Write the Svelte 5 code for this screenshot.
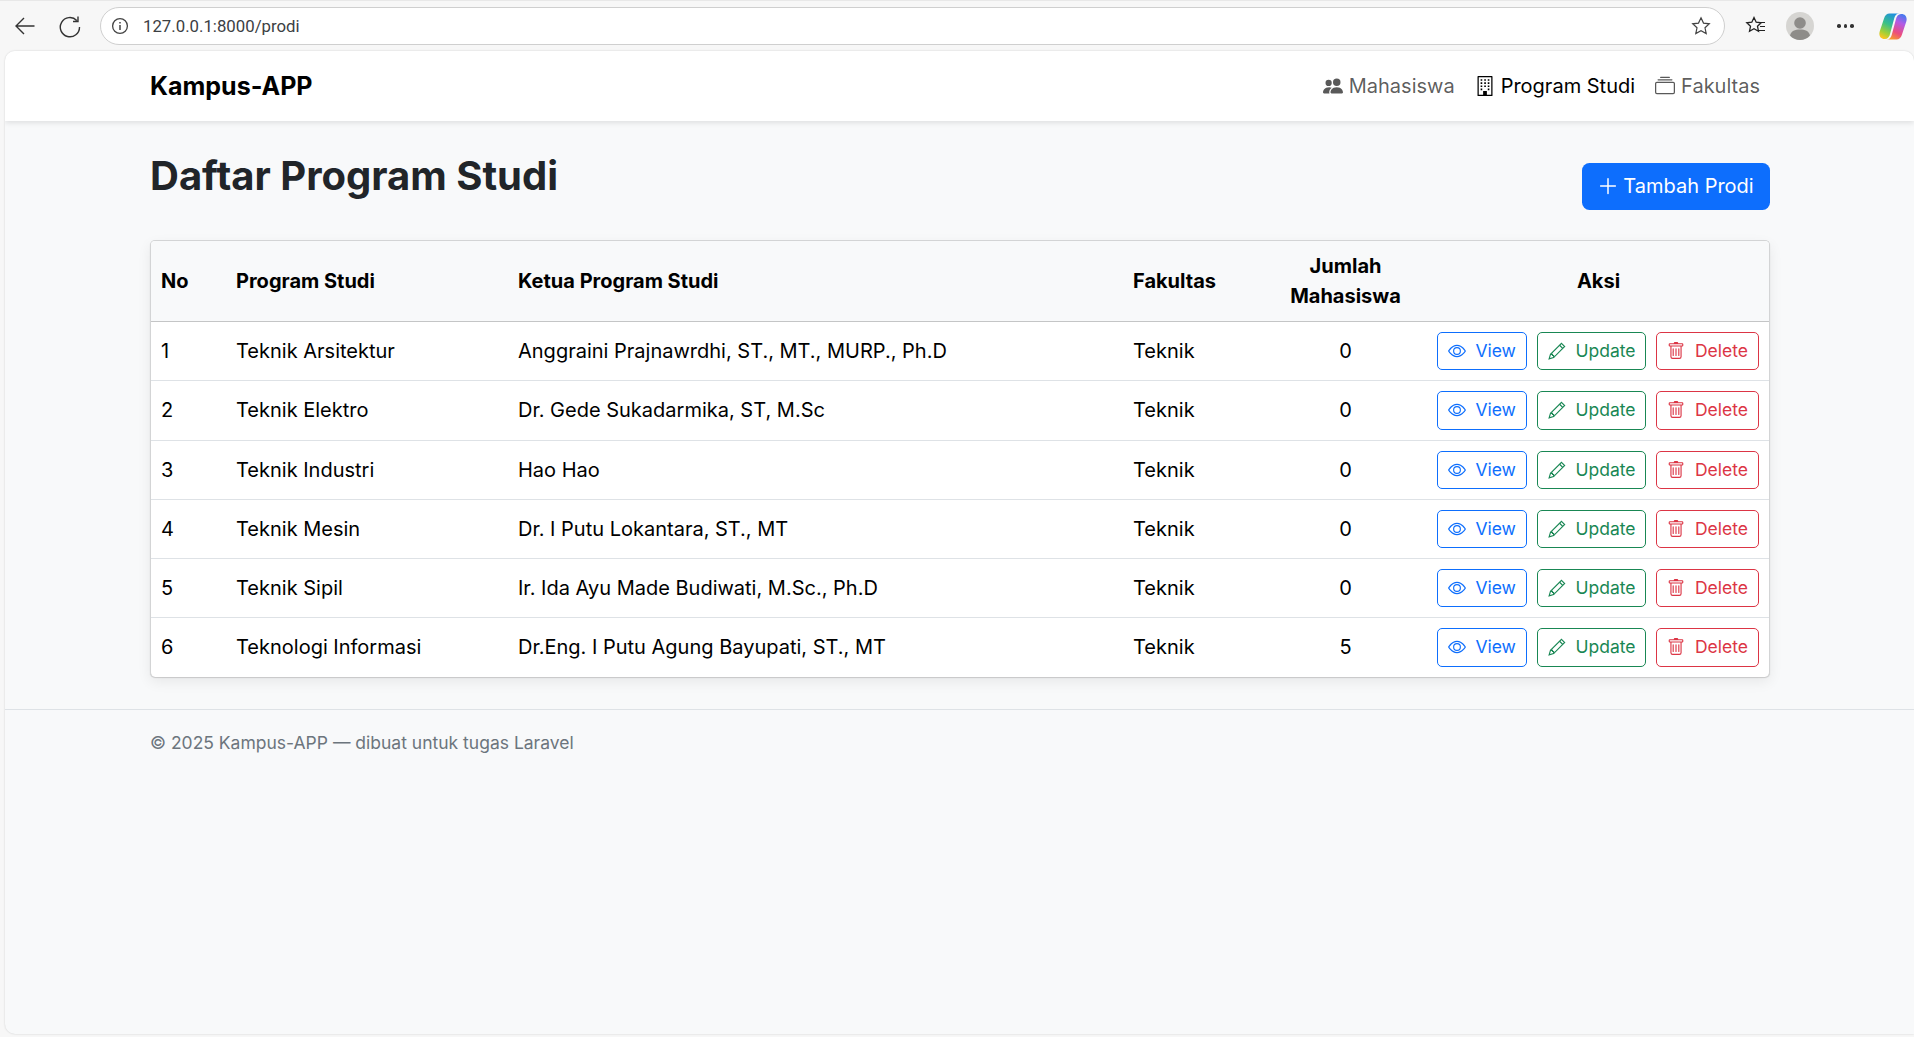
<script>
  const rows = [
    { no: 1, prodi: "Teknik Arsitektur", ketua: "Anggraini Prajnawrdhi, ST., MT., MURP., Ph.D", jumlah: 0 },
    { no: 2, prodi: "Teknik Elektro", ketua: "Dr. Gede Sukadarmika, ST, M.Sc", jumlah: 0 },
    { no: 3, prodi: "Teknik Industri", ketua: "Hao Hao", jumlah: 0 },
    { no: 4, prodi: "Teknik Mesin", ketua: "Dr. I Putu Lokantara, ST., MT", jumlah: 0 },
    { no: 5, prodi: "Teknik Sipil", ketua: "Ir. Ida Ayu Made Budiwati, M.Sc., Ph.D", jumlah: 0 },
    { no: 6, prodi: "Teknologi Informasi", ketua: "Dr.Eng. I Putu Agung Bayupati, ST., MT", jumlah: 5 }
  ];
</script>

<div class="browser">
  <div class="chrome">
    <svg class="tool back" viewBox="0 0 24 24" width="24" height="24"><path d="M21.500 12H3M11 4l-8 8 8 8" fill="none" stroke="#333" stroke-width="1.400"/></svg>
    <svg class="tool reload" viewBox="0 0 24 24" width="24" height="24"><path d="M18.800 6.500A9.600 9.600 0 1 0 21.500 13M20 2.500v5h-5" fill="none" stroke="#333" stroke-width="1.400"/></svg>
    <div class="address">
      <svg viewBox="0 0 18 18" width="18" height="18"><circle cx="9" cy="9" r="7.400" fill="none" stroke="#444" stroke-width="1.300"/><path d="M9 8v5M9 5v1.500" stroke="#444" stroke-width="1.500"/></svg>
      <span class="url">127.0.0.1:8000/prodi</span>
      <svg class="star" viewBox="0 0 20 20" width="20" height="20"><path d="M10 1.800l2.500 5.300 5.800.7-4.300 4 1.200 5.800L10 14.700l-5.200 2.900L6 11.800l-4.300-4 5.800-.7z" fill="none" stroke="#444" stroke-width="1.200"/></svg>
    </div>
    <svg class="favs" viewBox="0 0 22 22" width="22" height="22"><path d="M9 2.500l2.200 4.700 5 .6-3.700 3.500 1 5L9 13.800l-4.500 2.500 1-5L1.800 7.800l5-.6z" fill="none" stroke="#222" stroke-width="1.300"/><path d="M14 7.500h6M15 11.500h5M13 15.500h7" stroke="#222" stroke-width="1.200"/></svg>
    <svg class="avatar" viewBox="0 0 28 28" width="28" height="28"><circle cx="14" cy="14" r="14" fill="#d6d5d2"/><circle cx="14" cy="11" r="5.800" fill="#8e8c89"/><path d="M4 23.500c1-4.500 5-6 10-6s9 1.500 10 6c-2.500 2.800-6 4.500-10 4.500s-7.500-1.700-10-4.500z" fill="#8e8c89"/></svg>
    <span class="dots"><i></i><i></i><i></i></span>
    <svg class="copilot" viewBox="0 0 28 27" width="28" height="27">
      <defs>
        <linearGradient id="cpA" x1="0.700" y1="0" x2="0.300" y2="1"><stop offset="0" stop-color="#1f8fe0"/><stop offset="0.45" stop-color="#38c08a"/><stop offset="0.8" stop-color="#a5d034"/><stop offset="1" stop-color="#f6c522"/></linearGradient>
        <linearGradient id="cpB" x1="0.700" y1="0" x2="0.300" y2="1"><stop offset="0" stop-color="#f79a2e"/><stop offset="0.3" stop-color="#ec4d7e"/><stop offset="0.7" stop-color="#b25be6"/><stop offset="1" stop-color="#4a78ee"/></linearGradient>
      </defs>
      <path d="M10.500.5H20.500C17.500.5 16 2.500 15.300 5L11.300 20C10.500 24 8.500 26 6 26H5.500C1.500 26-.5 22.500.7 18.500L5 5.500C6 2 8 .5 10.500.5Z" fill="url(#cpA)"/>
      <path d="M10.500.5H20.500C17.500.5 16 2.500 15.300 5L11.300 20C10.500 24 8.500 26 6 26H5.500C1.500 26-.5 22.500.7 18.500L5 5.500C6 2 8 .5 10.500.5Z" fill="url(#cpB)" transform="rotate(180 14 13.500)"/>
    </svg>
  </div>

  <div class="page">
    <nav class="navbar">
      <a class="brand" href="#top">Kampus-APP</a>
      <div class="nav-links">
        <a class="nav-link" href="#mahasiswa">
          <svg viewBox="0 0 16 16" width="20" height="20" fill="currentColor"><path d="M7 14s-1 0-1-1 1-4 5-4 5 3 5 4-1 1-1 1H7Zm4-6a3 3 0 1 0 0-6 3 3 0 0 0 0 6Zm-5.800 6A2.200 2.200 0 0 1 5 13c0-1.400.7-2.800 2-3.700A6.500 6.500 0 0 0 5 9c-4 0-5 3-5 4s1 1 1 1h4.200ZM4.500 8a2.500 2.500 0 1 0 0-5 2.500 2.500 0 0 0 0 5Z"/></svg>
          Mahasiswa
        </a>
        <a class="nav-link active" href="#prodi">
          <svg viewBox="0 0 16 16" width="20" height="20" fill="currentColor"><path d="M2.500 0h11a.5.5 0 0 1 .5.5v15a.5.5 0 0 1-.5.5h-11a.5.5 0 0 1-.5-.5V.5a.5.5 0 0 1 .5-.5ZM3 1v14h10V1H3Z"/><path d="M6.500 12h3v3.500h-3zM4.500 2.500h1.300v1.300H4.500zM7.400 2.500h1.300v1.300H7.400zM10.200 2.500h1.300v1.300h-1.300zM4.500 5h1.300v1.300H4.500zM7.400 5h1.300v1.300H7.400zM10.200 5h1.300v1.300h-1.300zM4.500 7.500h1.300v1.300H4.500zM7.400 7.500h1.300v1.300H7.400zM10.200 7.500h1.300v1.300h-1.300zM4.500 10h1.300v1.300H4.500zM10.200 10h1.300v1.300h-1.300z"/></svg>
          Program Studi
        </a>
        <a class="nav-link" href="#fakultas">
          <svg viewBox="0 0 16 16" width="20" height="20" fill="currentColor"><path d="M2.500 3.500a.5.5 0 0 1 0-1h11a.5.5 0 0 1 0 1h-11Zm2-2a.5.5 0 0 1 0-1h7a.5.5 0 0 1 0 1h-7ZM0 13a1.500 1.500 0 0 0 1.500 1.500h13A1.500 1.500 0 0 0 16 13V6a1.500 1.500 0 0 0-1.500-1.500h-13A1.500 1.500 0 0 0 0 6v7Zm1.500.5A.5.5 0 0 1 1 13V6a.5.5 0 0 1 .5-.5h13a.5.5 0 0 1 .5.5v7a.5.5 0 0 1-.5.5h-13Z"/></svg>
          Fakultas
        </a>
      </div>
    </nav>

    <main class="content">
      <div class="head">
        <h1>Daftar Program Studi</h1>
        <a class="btn-add" href="#tambah">
          <svg viewBox="0 0 16 16" width="20" height="20" fill="currentColor"><path d="M8 1.500a.6.6 0 0 1 .6.6v5.300h5.300a.6.6 0 0 1 0 1.200H8.600v5.300a.6.6 0 0 1-1.200 0V8.600H2.100a.6.6 0 0 1 0-1.200h5.300V2.100a.6.6 0 0 1 .6-.6Z"/></svg>
          Tambah Prodi
        </a>
      </div>

      <div class="card">
        <table>
          <colgroup>
            <col style="width:75px" />
            <col style="width:282px" />
            <col style="width:615px" />
            <col style="width:140px" />
            <col style="width:165px" />
            <col />
          </colgroup>
          <thead>
            <tr>
              <th>No</th>
              <th>Program Studi</th>
              <th>Ketua Program Studi</th>
              <th>Fakultas</th>
              <th class="center">Jumlah Mahasiswa</th>
              <th class="center">Aksi</th>
            </tr>
          </thead>
          <tbody>
            {#each rows as row}
              <tr>
                <td>{row.no}</td>
                <td>{row.prodi}</td>
                <td>{row.ketua}</td>
                <td>Teknik</td>
                <td class="center">{row.jumlah}</td>
                <td>
                  <div class="actions">
                    <a class="btn view" href="#view">
                      <svg viewBox="0 0 16 16" width="18" height="18" fill="currentColor"><path d="M16 8s-3-5.500-8-5.500S0 8 0 8s3 5.500 8 5.500S16 8 16 8ZM1.200 8A13 13 0 0 1 2.900 5.900C4.100 4.700 5.900 3.500 8 3.500s3.900 1.200 5.100 2.400A13 13 0 0 1 14.800 8a13 13 0 0 1-1.700 2.100c-1.200 1.200-3 2.400-5.100 2.400s-3.900-1.200-5.100-2.400A13 13 0 0 1 1.200 8Z"/><path d="M8 5.500a2.500 2.500 0 1 0 0 5 2.500 2.500 0 0 0 0-5ZM4.500 8a3.500 3.500 0 1 1 7 0 3.500 3.500 0 0 1-7 0Z"/></svg>
                      View
                    </a>
                    <a class="btn update" href="#update">
                      <svg viewBox="0 0 16 16" width="18" height="18" fill="none" stroke="currentColor" stroke-width="1"><path d="M12 1.200 14.800 4 5 13.800 1 15l1.200-4z"/><path d="M10.300 2.900l2.800 2.800M2.300 11h1.700v1h1v1.700"/></svg>
                      Update
                    </a>
                    <a class="btn delete" href="#delete">
                      <svg viewBox="0 0 16 16" width="18" height="18" fill="currentColor"><path d="M5.500 5.500A.5.5 0 0 1 6 6v6a.5.5 0 0 1-1 0V6a.5.5 0 0 1 .5-.5Zm2.500 0a.5.5 0 0 1 .5.5v6a.5.5 0 0 1-1 0V6a.5.5 0 0 1 .5-.5Zm3 .5a.5.5 0 0 0-1 0v6a.5.5 0 0 0 1 0V6Z"/><path d="M14.500 3a1 1 0 0 1-1 1H13v9a2 2 0 0 1-2 2H5a2 2 0 0 1-2-2V4h-.5a1 1 0 0 1-1-1V2a1 1 0 0 1 1-1H6a1 1 0 0 1 1-1h2a1 1 0 0 1 1 1h3.500a1 1 0 0 1 1 1v1ZM4 4v9a1 1 0 0 0 1 1h6a1 1 0 0 0 1-1V4H4ZM2.500 3h11V2h-11v1Z"/></svg>
                      Delete
                    </a>
                  </div>
                </td>
              </tr>
            {/each}
          </tbody>
        </table>
      </div>
    </main>

    <footer class="footer">© 2025 Kampus-APP — dibuat untuk tugas Laravel</footer>
  </div>
</div>

<style>
  :global(body) {
    margin: 0;
    background: #f7f7f7;
    font-family: Inter, "Liberation Sans", sans-serif;
    overflow: hidden;
  }

  a {
    text-decoration: none;
  }

  .browser {
    height: 1037px;
    display: flex;
    flex-direction: column;
  }

  .chrome {
    height: 51px;
    flex: none;
    display: flex;
    align-items: center;
    color: #333;
    box-sizing: border-box;
    padding-left: 13px;
    border-top: 1px solid #e8e8e8;
  }

  .tool {
    flex: none;
  }

  .reload {
    margin-left: 21px;
  }

  .address {
    margin-left: 18px;
    width: 1625px;
    flex: none;
    height: 38px;
    box-sizing: border-box;
    background: #fff;
    border: 1px solid #cfcfcf;
    border-radius: 19px;
    display: flex;
    align-items: center;
    padding: 0 13px 0 10px;
  }

  .url {
    margin-left: 14px;
    font-family: Roboto, "Noto Sans", sans-serif;
    font-size: 16.800px;
    color: #3c4043;
  }

  .star {
    margin-left: auto;
  }

  .favs {
    margin-left: 20px;
    flex: none;
  }

  .avatar {
    margin-left: 19px;
    flex: none;
  }

  .dots {
    margin-left: 23px;
    display: flex;
    gap: 3px;
    flex: none;
  }

  .dots i {
    width: 3.500px;
    height: 3.500px;
    border-radius: 50%;
    background: #333;
  }

  .copilot {
    margin-left: 25px;
    flex: none;
  }

  .page {
    flex: 1;
    margin-left: 5px;
    margin-bottom: 3px;
    background: #f8f9fa;
    border-radius: 10px 10px 0 10px;
    box-shadow: 0 0 2px rgba(0, 0, 0, 0.18);
    overflow: hidden;
  }

  .navbar {
    height: 70px;
    background: #fff;
    display: flex;
    align-items: center;
    justify-content: space-between;
    padding: 0 144px 0 145px;
    box-shadow: 0 2px 5px rgba(0, 0, 0, 0.1);
  }

  .brand {
    font-size: 25px;
    font-weight: 700;
    color: #000;
  }

  .nav-links {
    display: flex;
    gap: 20px;
    padding-right: 10px;
  }

  .nav-link {
    display: flex;
    align-items: center;
    gap: 6px;
    font-size: 20px;
    color: rgba(0, 0, 0, 0.65);
  }

  .nav-link.active {
    color: #000;
  }

  .content {
    padding: 0 144px 0 145px;
  }

  .head {
    display: flex;
    justify-content: space-between;
    align-items: flex-start;
    height: 119px;
    box-sizing: border-box;
    padding-top: 31px;
  }

  h1 {
    margin: 0;
    font-size: 40px;
    font-weight: 700;
    line-height: 48px;
    color: #212529;
  }

  .btn-add {
    margin-top: 11px;
    height: 47px;
    width: 188px;
    box-sizing: border-box;
    padding-bottom: 1px;
    background: #0d6efd;
    color: #fff;
    border-radius: 7.500px;
    display: flex;
    align-items: center;
    justify-content: center;
    gap: 5px;
    font-size: 20px;
  }

  .card {
    background: #fff;
    border: 1px solid #d3d4d5;
    border-bottom: 0;
    border-radius: 5px;
    box-shadow: 0 5px 14px rgba(0, 0, 0, 0.07), 0 1px 1px rgba(0, 0, 0, 0.16);
    overflow: hidden;
  }

  table {
    width: 100%;
    border-collapse: separate;
    border-spacing: 0;
    table-layout: fixed;
    font-size: 20px;
    line-height: 30px;
    color: #000;
  }

  thead tr {
    height: 81px;
    background: #f8f9fa;
  }

  th {
    font-weight: 700;
    text-align: left;
    padding: 0 10px;
    border-bottom: 1px solid #c4c5c6;
  }

  td {
    padding: 10px;
    border-bottom: 1px solid #dee2e6;
    white-space: nowrap;
  }

  tbody tr:last-child td {
    border-bottom: 0;
  }

  .center {
    text-align: center;
  }

  .actions {
    display: flex;
    justify-content: flex-end;
    gap: 10px;
  }

  .btn {
    height: 38.250px;
    box-sizing: border-box;
    display: flex;
    align-items: center;
    gap: 9.500px;
    padding: 0 10px;
    border: 1px solid;
    border-radius: 5px;
    font-size: 17.500px;
    font-weight: 400;
  }

  .view {
    color: #0d6efd;
  }

  .update {
    color: #198754;
  }

  .delete {
    color: #dc3545;
  }

  .footer {
    margin-top: 32px;
    border-top: 1px solid #dee2e6;
    padding: 20px 145px;
    font-size: 17.500px;
    line-height: 26.250px;
    color: #6c757d;
  }
</style>
